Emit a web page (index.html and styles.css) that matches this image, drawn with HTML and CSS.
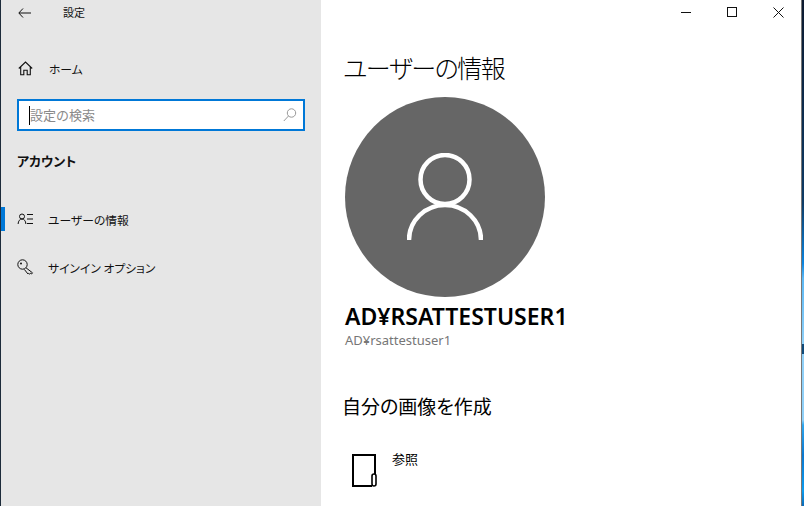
FILE: index.html
```html
<!DOCTYPE html>
<html lang="ja">
<head>
<meta charset="utf-8">
<title>設定</title>
<link rel="stylesheet" href="styles.css">
</head>
<body>
<div class="edge-left"></div>
<aside class="sidebar">
  <div class="titlebar">
    <svg class="back" width="13" height="10" viewBox="0 0 13 10"><path d="M5 .5.800 5 5 9.500M1 5h12" fill="none" stroke="#111" stroke-width="1"/></svg>
    <span class="app-title">設定</span>
  </div>
  <div class="home">
    <svg class="nav-icon" width="15" height="15" viewBox="0 0 15 15"><path d="M.8 7.500 7.500 1l6.700 6.500M2.700 6v7.800h3.100V9.200h3.400v4.600h3.100V6" fill="none" stroke="#111" stroke-width="1.100"/></svg>
    <span>ホーム</span>
  </div>
  <div class="search">
    <span class="caret"></span><span class="placeholder">設定の検索</span>
    <svg class="search-icon" width="14" height="14" viewBox="0 0 14 14"><circle cx="8.500" cy="5" r="4.200" fill="none" stroke="#999"/><path d="M5.500 8 .8 13" stroke="#999" fill="none"/></svg>
  </div>
  <h2 class="section">アカウント</h2>
  <nav class="nav">
    <div class="nav-item active">
      <svg class="nav-icon" width="16" height="12" viewBox="0 0 16 12"><circle cx="4.500" cy="3.500" r="2.500" fill="none" stroke="#111"/><path d="M.6 11C.8 7.800 2.400 6 4.500 6s3.700 1.800 3.900 5M9.500 1.500h6M9.500 6h6M9.500 10.500h6" fill="none" stroke="#111"/></svg>
      <span>ユーザーの情報</span>
    </div>
    <div class="nav-item">
      <svg class="nav-icon" width="17" height="17" viewBox="0 0 17 17"><circle cx="5.500" cy="5.500" r="4.700" fill="none" stroke="#111"/><circle cx="4" cy="4.500" r="1" fill="#111"/><path d="M9 8.800l6.500 5-1 1.200-1-.8-.8 1-1-.8-.7.600-3.700-4.600" fill="none" stroke="#111"/></svg>
      <span>サインイン オプション</span>
    </div>
  </nav>
</aside>
<main class="content">
  <div class="window-controls">
    <svg width="10" height="10" viewBox="0 0 10 10"><path d="M0 5.500h10" stroke="#111"/></svg>
    <svg width="10" height="10" viewBox="0 0 10 10"><rect x=".5" y=".5" width="9" height="9" fill="none" stroke="#111"/></svg>
    <svg width="11" height="11" viewBox="0 0 11 11"><path d="M.5.500l10 10M10.500.500l-10 10" stroke="#111" fill="none"/></svg>
  </div>
  <h1 class="page-title">ユーザーの情報</h1>
  <div class="avatar">
    <svg width="76" height="87" viewBox="0 0 76 87"><circle cx="38" cy="26.500" r="24.500" fill="none" stroke="#fff" stroke-width="4.500"/><path d="M2 87A36 35 0 0 1 74 87" fill="none" stroke="#fff" stroke-width="4.500"/></svg>
  </div>
  <div class="user-name">AD¥RSATTESTUSER1</div>
  <div class="user-id">AD¥rsattestuser1</div>
  <h2 class="subhead">自分の画像を作成</h2>
  <div class="browse">
    <svg width="25" height="33" viewBox="0 0 25 33"><path d="M23 20V1H1v31h19" fill="none" stroke="#000" stroke-width="2"/><rect x="20" y="20" width="4" height="12" rx="2" fill="#fff" stroke="#000" stroke-width="1.600"/></svg>
    <span class="browse-label">参照</span>
  </div>
</main>
<div class="edge-right"></div>
</body>
</html>
```
FILE: styles.css
```css
* { box-sizing: border-box; }
html, body { margin: 0; height: 100%; overflow: hidden; }
body {
  display: flex;
  width: 804px;
  height: 506px;
  background: #fff;
  color: #000;
  font-family: "Noto Sans CJK JP", "Noto Sans", sans-serif;
  font-feature-settings: "palt";
}
.edge-left { width: 1px; background: #1d2b3a; flex: none; }
.sidebar {
  width: 320px;
  flex: none;
  background: #e6e6e6;
  display: flex;
  flex-direction: column;
  font-size: 11.8px;
  color: #111;
}
.titlebar { display: flex; align-items: center; height: 25px; padding-left: 17px; }
.back { margin-right: 32px; }
.app-title { font-size: 11px; line-height: 25px; }
.home { display: flex; align-items: center; height: 22px; margin-top: 32px; padding-left: 17px; }
.home .nav-icon { margin-right: 16px; }
.search {
  display: flex;
  align-items: center;
  width: 288px;
  height: 32px;
  margin: 20px 0 0 16px;
  padding: 0 6px 0 10px;
  background: #fff;
  border: 2px solid #0078d7;
}
.caret { width: 1px; height: 19px; background: #000; flex: none; }
.placeholder { flex: 1; font-size: 13px; color: #8a8a8a; padding-bottom: 2px; font-feature-settings: normal; }
.section { margin: 20px 0 0 16px; font-size: 13px; line-height: 20px; font-weight: 700; }
.nav { display: flex; flex-direction: column; margin-top: 36px; gap: 24px; }
.nav-item {
  display: flex;
  align-items: center;
  height: 24px;
  padding-left: 16px;
  position: relative;
}
.nav-item .nav-icon { width: 17px; margin-right: 14px; }
.nav-item.active::before {
  content: "";
  position: absolute;
  left: 0;
  top: 0;
  width: 4px;
  height: 24px;
  background: #0078d7;
}
.content { flex: 1; display: flex; flex-direction: column; padding-left: 23px; min-width: 0; }
.window-controls {
  display: flex;
  align-items: center;
  gap: 36px;
  justify-content: flex-end;
  height: 24px;
  padding-right: 17px;
}
.page-title { margin: 25px 0 0 -1px; font-size: 25px; line-height: 36px; font-weight: 300; letter-spacing: -1.4px; }
.avatar {
  width: 200px;
  height: 200px;
  margin: 12px 0 0 1px;
  border-radius: 50%;
  background: #666;
  display: flex;
  align-items: center;
  justify-content: center;
  padding-bottom: 1px;
}
.user-name { margin: 6px 0 0 1px; font-size: 23px; line-height: 26px; font-weight: 600; font-family: "Noto Sans", sans-serif; }
.user-id { margin: 3px 0 0 1px; font-size: 13px; line-height: 16px; color: #767676; font-family: "Noto Sans", sans-serif; }
.subhead { margin: 45px 0 0 -2px; font-size: 19px; line-height: 26px; font-weight: 400; }
.browse { display: flex; align-items: flex-start; margin: 35px 0 0 8px; gap: 15px; }
.browse-label { font-size: 13px; line-height: 16px; margin-top: -3px; }
.edge-right {
  width: 3px;
  flex: none;
  border-left: 1px solid #777;
  background: linear-gradient(#0c1a30 0, #0d3b66 40%, #0a84e0 52%, #5bb8f5 55%, #8fd0f8 68%, #0f4a7a 68%, #0f4a7a 70%, #8fd0f8 70%, #8fd0f8 83%, #2ea6ee 84%, #0a78d0 90%, #0a9cf0 97%, #0a6ab8 100%);
}
```
